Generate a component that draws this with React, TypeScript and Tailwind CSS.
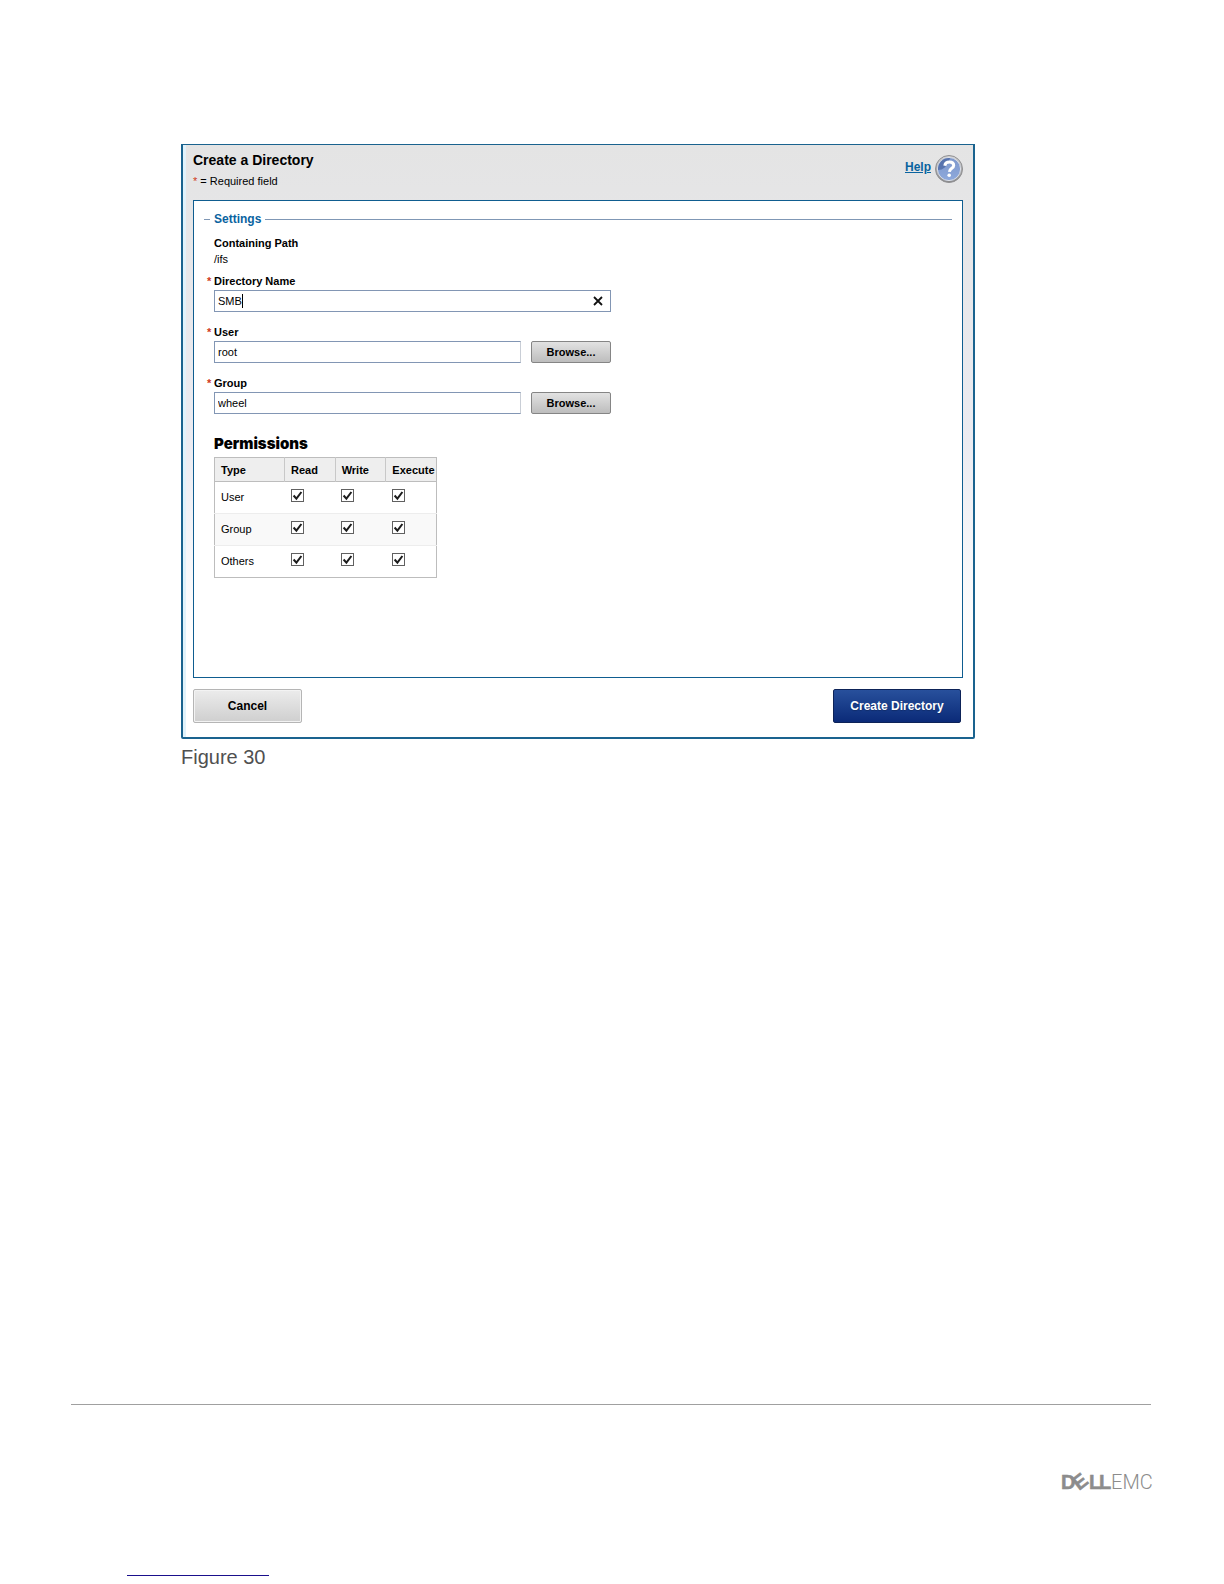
import React, { useState } from "react";
import clsx from "clsx";

const permissionTypes = ["User", "Group", "Others"];
const permissionModes = ["Read", "Write", "Execute"];

function HelpIcon() {
  return (
    <svg className="h-7 w-7" viewBox="0 0 28 28" aria-hidden="true">
      <defs>
        <linearGradient id="ball" x1="0" y1="0" x2="0" y2="1">
          <stop offset="0" stopColor="#7d97cb" />
          <stop offset="1" stopColor="#8ea9dc" />
        </linearGradient>
        <linearGradient id="ring" x1="0" y1="0" x2="0" y2="1">
          <stop offset="0" stopColor="#d4d4d4" />
          <stop offset="1" stopColor="#8a8a8c" />
        </linearGradient>
      </defs>
      <circle cx="14" cy="14" r="13.5" fill="url(#ring)" stroke="#8f8f92" />
      <circle cx="14" cy="14" r="11.6" fill="url(#ball)" stroke="#dcdfe6" />
      <path d="M3 15c5 0 9-3 12-12A11 11 0 0 0 3 15z" fill="#46639f" opacity=".7" />
      <path
        d="M9.800 10.800c.3-2.500 2-3.700 4.600-3.700 2.600 0 4.300 1.300 4.300 3.300 0 3-4 2.800-4.300 6.400"
        fill="none"
        stroke="#fff"
        strokeWidth="3"
      />
      <circle cx="14.200" cy="20.200" r="1.800" fill="#fff" />
    </svg>
  );
}

function DellEmcLogo() {
  return (
    <svg
      className="h-7 w-[90px] overflow-visible fill-[#8c8c8c]"
      viewBox="0 0 90 28"
      role="img"
      aria-label="Dell EMC"
    >
      <g fontFamily="Liberation Sans" fontWeight="700" fontSize="20" stroke="#8c8c8c" strokeWidth=".5">
        <text x="0" y="21">D</text>
        <text transform="translate(18 23) rotate(-38)">E</text>
        <text x="28" y="21">L</text>
        <text x="38" y="21">L</text>
      </g>
      <text x="50" y="21" fontFamily="Roboto" fontWeight="300" fontSize="20">
        EMC
      </text>
    </svg>
  );
}

function Label({ htmlFor, children }: { htmlFor: string; children: React.ReactNode }) {
  return (
    <label htmlFor={htmlFor} className="-ml-[7px] flex h-4 font-bold">
      <span className="w-[7px] text-[#d03a20]">*</span>
      {children}
    </label>
  );
}

function BrowseField({ id, label, value }: { id: string; label: string; value: string }) {
  return (
    <div className="mt-3">
      <Label htmlFor={id}>{label}</Label>
      <div className="mt-px flex gap-2.5">
        <input
          id={id}
          type="text"
          defaultValue={value}
          className="h-[22px] min-w-0 flex-1 border border-[#8296b4] border-r-[#c9ced6] bg-white px-[3px] outline-none"
        />
        <button
          type="button"
          className="h-[22px] w-20 rounded-xs border border-[#858585] bg-linear-to-b from-[#e2e2e2] to-[#bdbdbd] font-bold"
        >
          Browse...
        </button>
      </div>
    </div>
  );
}

function Permissions() {
  return (
    <table className="mt-[5px] w-[223px] table-fixed border border-[#bdbdbd] text-left">
      <thead>
        <tr className="h-6 border-b border-[#bdbdbd] bg-[#eeeeee]">
          <th className="w-[70px] pl-1.5">Type</th>
          {permissionModes.map((mode) => (
            <th key={mode} className="border-l border-[#c8c8c8] pl-1.5">
              {mode}
            </th>
          ))}
        </tr>
      </thead>
      <tbody>
        {permissionTypes.map((type, i) => (
          <tr
            key={type}
            className={clsx("h-8", i > 0 && "border-t border-[#ededed]", i === 1 && "bg-[#f9f9f9]")}
          >
            <td className="pb-0.5 pl-1.5">{type}</td>
            {permissionModes.map((mode) => (
              <td key={mode} className="pb-1 pl-1.5">
                <span className="relative block h-[13px] w-[13px]">
                  <input
                    type="checkbox"
                    defaultChecked
                    aria-label={`${type} ${mode}`}
                    className="peer block h-[13px] w-[13px] appearance-none border border-[#606060] bg-white"
                  />
                  <svg
                    className="pointer-events-none absolute inset-0 hidden peer-checked:block"
                    viewBox="0 0 13 13"
                    aria-hidden="true"
                  >
                    <path d="M2.600 6.500l2.800 3.200 5-6.700" fill="none" stroke="#1c1c1c" strokeWidth="2" />
                  </svg>
                </span>
              </td>
            ))}
          </tr>
        ))}
      </tbody>
    </table>
  );
}

function CreateDirectory() {
  const [name, setName] = useState("SMB");

  return (
    <form className="rounded-b-xs border-2 border-t border-[#1a638f] bg-linear-to-b from-[#e4e4e4] via-[#ebebf1] to-white to-85% px-2.5 pb-3.5 text-[11px] leading-4 text-black shadow-[inset_3px_0_#e0f2fb]">
      <div className="flex h-[55px] justify-between pt-[7px]">
        <div>
          <h1 className="text-sm leading-4 font-bold">Create a Directory</h1>
          <p className="mt-[5px]">
            <span className="text-[#d03a20]">*</span> = Required field
          </p>
        </div>
        <a href="#help" className="flex items-start gap-1 text-xs font-bold text-[#0a639f] underline">
          <span className="pt-[7px]">Help</span>
          <span className="pt-[3px]">
            <HelpIcon />
          </span>
        </a>
      </div>

      <div className="h-[478px] border border-[#0f5d90] bg-white px-2.5 pt-2.5">
        <fieldset>
          <legend className="flex w-full items-center gap-1 text-xs font-bold text-[#0a639f]">
            <span className="h-px w-1.5 bg-[#7f97b5]" />
            Settings
            <span className="h-px flex-1 bg-[#7f97b5]" />
          </legend>
          <div className="ml-2.5 w-[397px] pt-2">
            <p className="font-bold">Containing Path</p>
            <p>/ifs</p>
            <div className="mt-1.5">
              <Label htmlFor="directory">Directory Name</Label>
              <div className="mt-px flex h-[22px] items-center border border-[#8296b4] bg-white pr-[7px]">
                <input
                  id="directory"
                  type="text"
                  value={name}
                  onChange={(e) => setName(e.target.value)}
                  className="field-sizing-content min-w-1 border-0 pl-[3px] outline-none"
                />
                <span className="h-3.5 w-px bg-black" />
                <button type="button" aria-label="Clear" className="ml-auto" onClick={() => setName("")}>
                  <svg className="h-2.5 w-2.5" viewBox="0 0 10 10" aria-hidden="true">
                    <path d="M1 1l8 8M9 1L1 9" stroke="#111" strokeWidth="1.800" />
                  </svg>
                </button>
              </div>
            </div>
            <BrowseField id="user" label="User" value="root" />
            <BrowseField id="group" label="Group" value="wheel" />
            <h2 className="mt-[22px] font-[Inter] text-[15px] leading-4 font-black">Permissions</h2>
            <Permissions />
          </div>
        </fieldset>
      </div>

      <div className="mt-[11px] flex justify-between pr-0.5 text-xs font-bold">
        <button
          type="button"
          className="h-[34px] w-[109px] rounded-xs border border-[#b5b5b5] bg-linear-to-b from-[#ececec] to-[#cfcfcf] inset-ring inset-ring-[#f3f3f3]"
        >
          Cancel
        </button>
        <button
          type="submit"
          className="h-[34px] w-32 rounded-xs border border-[#0d2358] bg-linear-to-b from-[#28509c] to-[#0b2a78] text-white text-shadow-xs"
        >
          Create Directory
        </button>
      </div>
    </form>
  );
}

function App() {
  return (
    <main className="flex min-h-screen flex-col bg-white pt-36 pr-[73px] pb-2 pl-[71px] font-['Liberation_Sans',Arial,sans-serif]">
      <figure className="ml-[110px] w-full max-w-[794px]">
        <CreateDirectory />
        <figcaption className="mt-1.5 text-xl leading-6 text-[#505050]">Figure 30</figcaption>
      </figure>

      <footer className="mt-auto border-t border-[#a0a0a0]">
        <div className="flex justify-end pt-[63px]">
          <DellEmcLogo />
        </div>
        <a
          href="#source"
          aria-label="Source"
          className="mt-[76px] ml-14 block h-1 w-[142px] border-b border-[#1a0f8c]"
        />
      </footer>
    </main>
  );
}

export default App;
